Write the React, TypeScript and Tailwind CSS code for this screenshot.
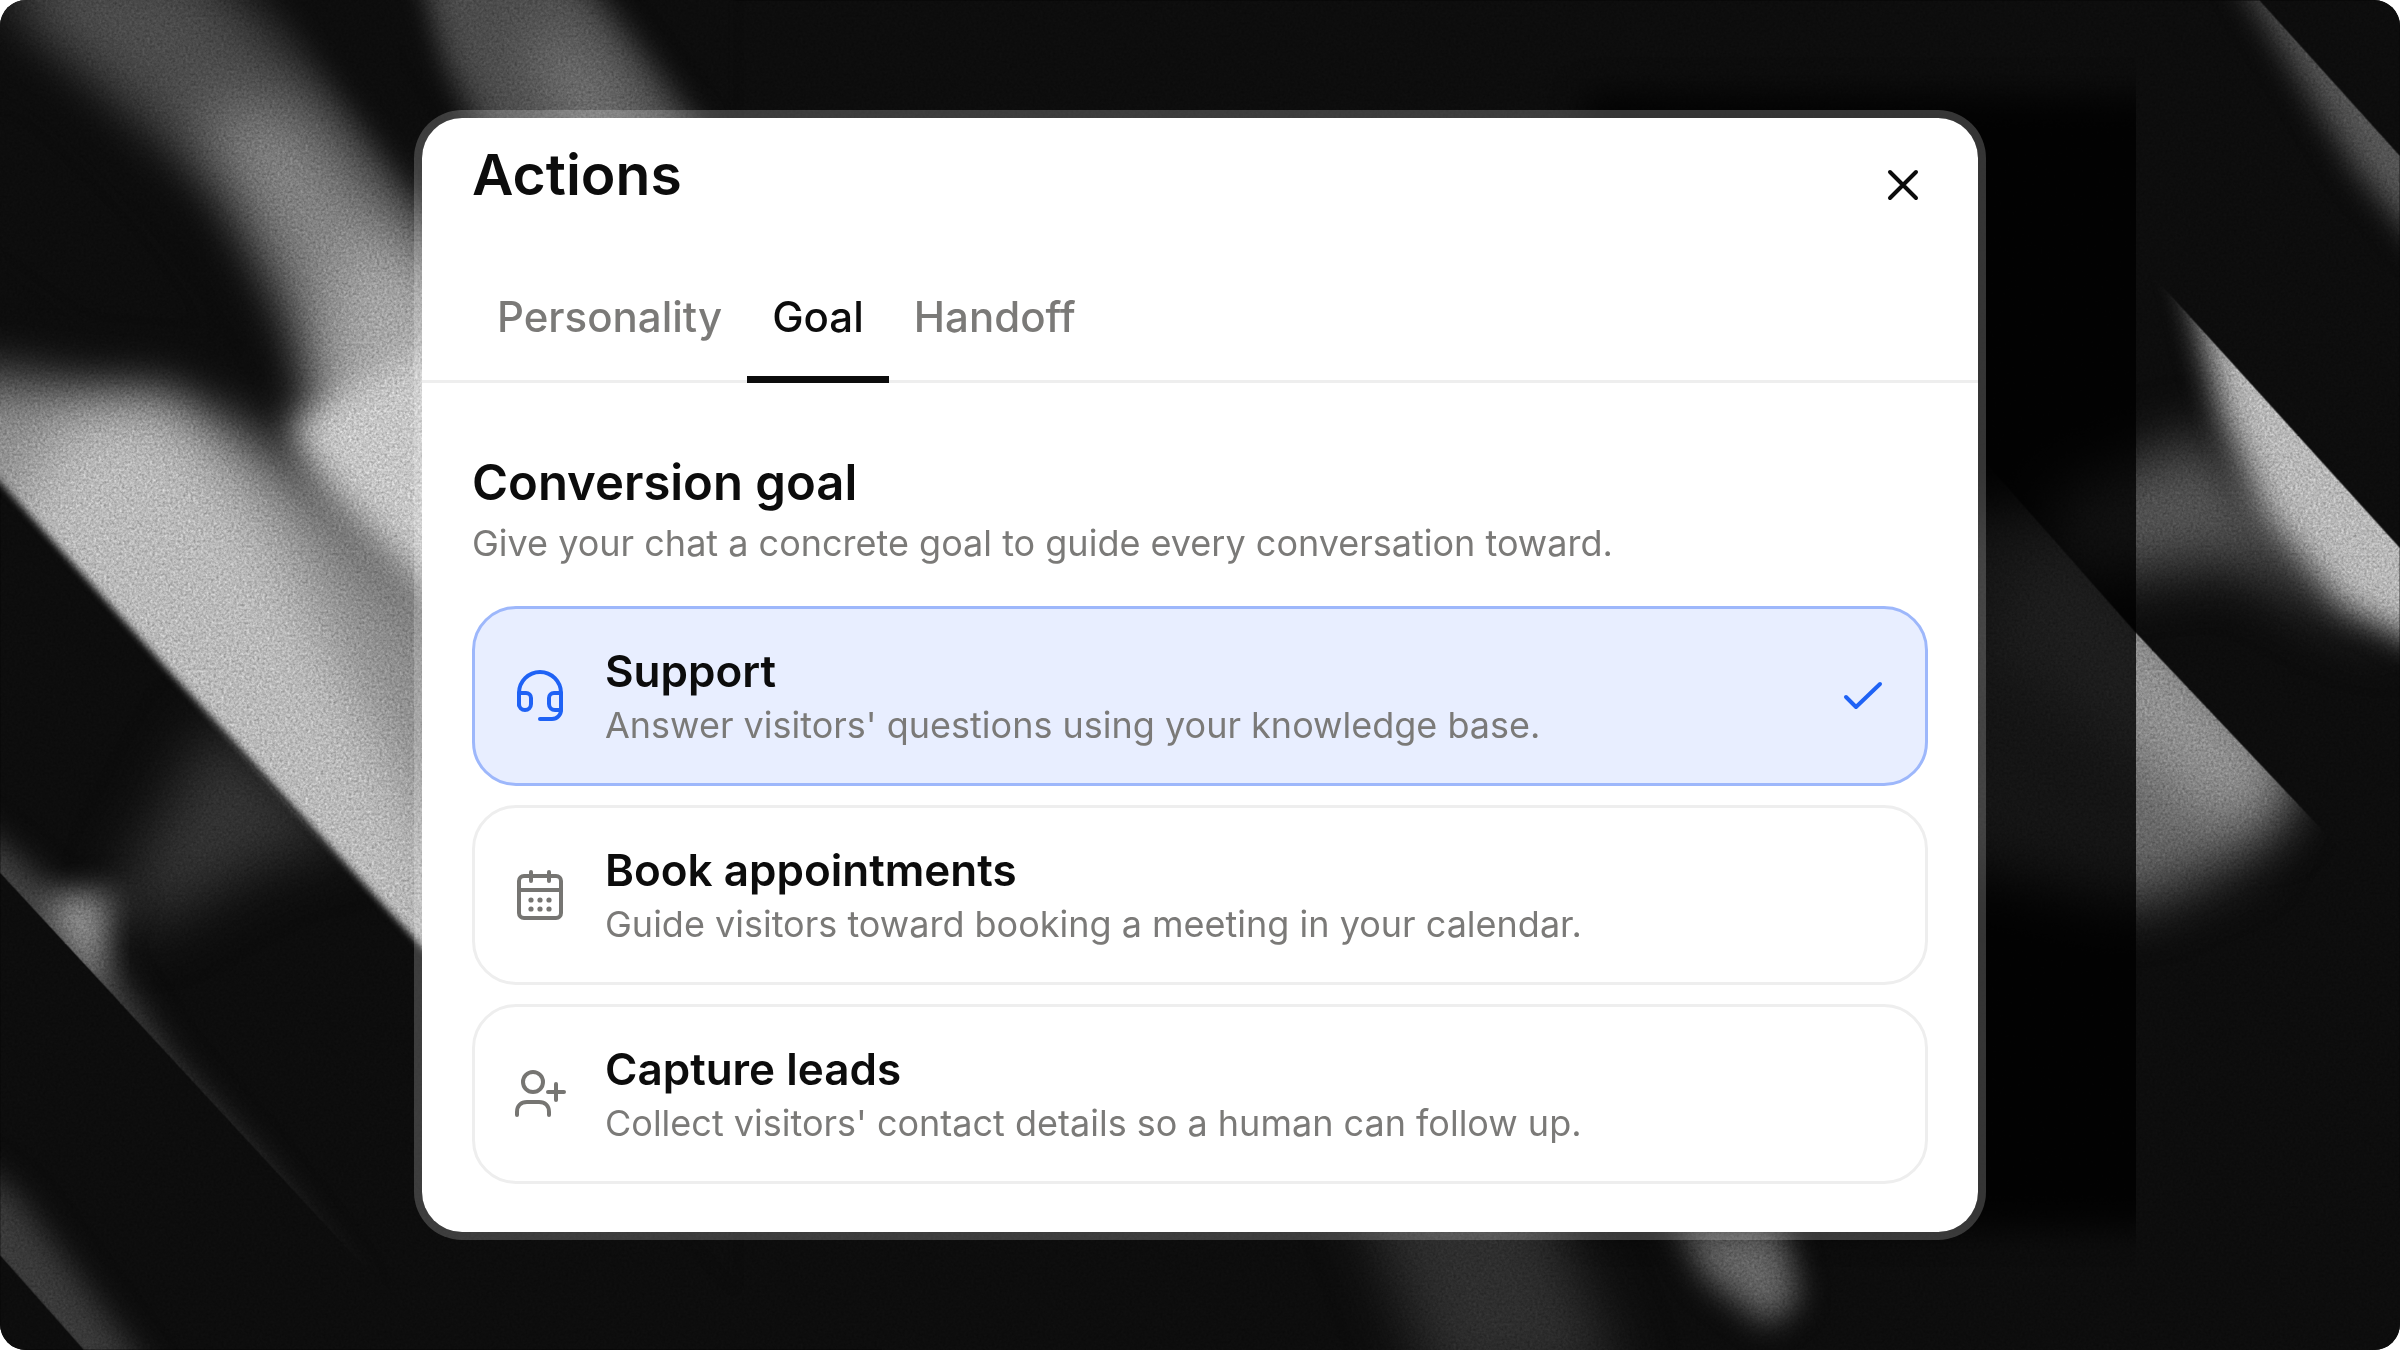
import { useState } from "react";
import type { ReactNode } from "react";

type GoalId = "support" | "book" | "leads";

interface Goal {
  id: GoalId;
  title: string;
  description: string;
  icon: ReactNode;
}

const TABS = ["Personality", "Goal", "Handoff"];

const iconProps = {
  viewBox: "0 0 56 56",
  fill: "none",
  stroke: "currentColor",
  strokeWidth: 4,
  strokeLinecap: "round",
  strokeLinejoin: "round",
  "aria-hidden": true,
  className: "size-14 shrink-0",
} as const;

function HeadsetIcon() {
  return (
    <svg {...iconProps}>
      <path d="M7 37V25a21 21 0 0 1 42 0v17c0 5-4 9-9 9H28" />
      <path d="M7 25h7a5 5 0 0 1 5 5v6a6 6 0 0 1-12 0z" />
      <path d="M49 25h-7a5 5 0 0 0-5 5v6a6 6 0 0 0 6 6h6z" />
    </svg>
  );
}

function CalendarIcon() {
  return (
    <svg {...iconProps}>
      <rect x="7" y="9" width="42" height="42" rx="5" />
      <path d="M7 23h42M19 5v9M37 5v9" />
      <g fill="currentColor" stroke="none">
        <circle cx="19" cy="33" r="2.6" />
        <circle cx="28" cy="33" r="2.6" />
        <circle cx="37" cy="33" r="2.6" />
        <circle cx="19" cy="42" r="2.6" />
        <circle cx="28" cy="42" r="2.6" />
        <circle cx="37" cy="42" r="2.6" />
      </g>
    </svg>
  );
}

function UserPlusIcon() {
  return (
    <svg {...iconProps}>
      <circle cx="21" cy="16" r="10" />
      <path d="M5 49v-3c0-6 4-10 10-10h12c6 0 10 4 10 10v3M44 18v16M36 26h16" />
    </svg>
  );
}

const GOALS: Goal[] = [
  {
    id: "support",
    title: "Support",
    description: "Answer visitors' questions using your knowledge base.",
    icon: <HeadsetIcon />,
  },
  {
    id: "book",
    title: "Book appointments",
    description: "Guide visitors toward booking a meeting in your calendar.",
    icon: <CalendarIcon />,
  },
  {
    id: "leads",
    title: "Capture leads",
    description: "Collect visitors' contact details so a human can follow up.",
    icon: <UserPlusIcon />,
  },
];

/** Grainy light streaks behind the dialog. */
function Backdrop() {
  return (
    <svg
      viewBox="0 0 1568 882"
      preserveAspectRatio="none"
      aria-hidden="true"
      className="absolute inset-0 h-full w-full"
    >
      <defs>
        <filter id="b1" x="-50%" y="-50%" width="200%" height="200%" colorInterpolationFilters="sRGB">
          <feGaussianBlur stdDeviation="2.5" />
        </filter>
        <filter id="b2" x="-50%" y="-50%" width="200%" height="200%" colorInterpolationFilters="sRGB">
          <feGaussianBlur stdDeviation="10" />
        </filter>
        <filter id="b3" x="-50%" y="-50%" width="200%" height="200%" colorInterpolationFilters="sRGB">
          <feGaussianBlur stdDeviation="19" />
        </filter>
        <filter
          id="grain"
          x="0"
          y="0"
          width="1568"
          height="882"
          filterUnits="userSpaceOnUse"
          colorInterpolationFilters="sRGB"
        >
          <feTurbulence type="fractalNoise" baseFrequency="0.6" numOctaves="2" seed="4" />
          <feColorMatrix values="0.6 0.6 0 0 -0.1  0.6 0.6 0 0 -0.1  0.6 0.6 0 0 -0.1  0 0 0 0 1" />
          <feComposite in="SourceGraphic" operator="arithmetic" k1="0.6" k2="0.7" />
        </filter>
        <clipPath id="upperLeft">
          <path d="M-40 -40H480V842L267 609L113 441L0 315L-40 270z" />
        </clipPath>
        <clipPath id="lowerLeft">
          <path d="M0 570L240 830L300 882H400V755L267 612L113 444L0 318z" />
        </clipPath>
        <clipPath id="corner">
          <path d="M0 820L55 882H200V700H0z" />
        </clipPath>
        <clipPath id="wedge">
          <path d="M1300 63L1410 184L1568 358V700H1300z" />
        </clipPath>
        <clipPath id="beam">
          <path d="M1290 294L1395 413L1500 524L1568 596V800H1200V294z" />
        </clipPath>
        <clipPath id="topRight">
          <path d="M1300 0H1476L1568 102V400H1300z" />
        </clipPath>
      </defs>
      <g filter="url(#grain)">
        <rect width="1568" height="882" fill="#0d0d0d" />

        <g clipPath="url(#lowerLeft)">
          <path d="M80 580L140 470L230 550L180 560L90 610z" fill="#343434" filter="url(#b3)" />
          <path d="M-20 535L40 585L85 580L66 620L110 690L170 760L240 850L-20 590z" fill="#424242" filter="url(#b2)" />
          <path d="M30 588L66 586L66 650z" fill="#969696" filter="url(#b2)" />
        </g>
        <g clipPath="url(#corner)">
          <path d="M-30 750L10 780L100 900L-30 900z" fill="#3a3a3a" filter="url(#b2)" />
        </g>

        <g filter="url(#b1)">
          <g clipPath="url(#upperLeft)">
            <path d="M-20 -40H480V842H-20z" fill="#0d0d0d" />
            <path d="M0 -30L120 -30L220 60L300 160V300L220 260L150 130L20 20z" fill="#4c4c4c" filter="url(#b3)" />
            <path d="M130 70L190 75L300 190V340L230 290L180 170z" fill="#848484" filter="url(#b3)" />
            <path d="M230 150L340 230V480L200 320L215 240z" fill="#a8a8a8" filter="url(#b3)" />
            <path d="M-80 245L40 250L110 250L170 290L320 430V720L-80 300z" fill="#8e8e8e" filter="url(#b3)" />
            <path d="M20 310L50 272L110 272L180 350L290 560L300 720L180 580L0 350z" fill="#bababa" filter="url(#b3)" />
            <path d="M190 278L225 258L300 215V400L250 345L205 300z" fill="#c6c6c6" filter="url(#b2)" />
            <path d="M-30 20L40 60L110 130L165 205L175 268L110 238L50 238L-40 170z" fill="#0d0d0d" filter="url(#b3)" />
            <path d="M260 -40L360 -40L460 90L420 120L330 110L290 40z" fill="#4c4c4c" filter="url(#b2)" />
            <path d="M340 20L375 25L430 95L380 100z" fill="#787878" filter="url(#b3)" />
            <path d="M170 -30L270 -20L280 60L290 140L262 110L225 60z" fill="#0d0d0d" filter="url(#b2)" />
          </g>
        </g>

        <g clipPath="url(#topRight)">
          <path d="M1460 -20L1480 -20L1590 100V170L1540 110z" fill="#565656" filter="url(#b2)" />
        </g>
        <g clipPath="url(#wedge)">
          <path d="M1340 325L1440 285L1520 370L1568 420L1460 365L1340 380z" fill="#545454" filter="url(#b3)" />
          <path d="M1422 150L1620 370V440L1530 395L1480 335L1452 270z" fill="#b8b8b8" filter="url(#b2)" />
        </g>
        <g clipPath="url(#beam)">
          <path d="M1260 340L1330 330L1490 510L1465 560L1395 590L1260 560z" fill="#686868" filter="url(#b3)" />
          <path d="M1340 340L1400 390L1500 500L1480 540L1440 530L1380 480L1300 420z" fill="#929292" filter="url(#b3)" />
        </g>

        <path d="M880 760L1000 760L1060 900L940 910z" fill="#2e2e2e" filter="url(#b3)" />
        <path d="M1080 770L1160 780L1175 850L1155 865L1115 835z" fill="#646464" filter="url(#b2)" />
      </g>
    </svg>
  );
}

export default function App() {
  const [tab, setTab] = useState("Goal");
  const [selected, setSelected] = useState<GoalId>("support");

  return (
    <div className="bg-white font-['Inter','Liberation_Sans',sans-serif]">
      <main className="relative flex min-h-screen items-center justify-center overflow-hidden rounded-[26px] bg-[#0d0d0d]">
        <Backdrop />

        {/* The dialog's shadow, cut off hard on its right-hand side */}
        <div className="absolute inset-y-0 right-[11%] w-[27%] overflow-hidden" aria-hidden="true">
          <div className="absolute top-[7%] -right-20 bottom-[9%] left-[15%] bg-black/80 blur-lg" />
        </div>

        <section
          role="dialog"
          aria-labelledby="dialog-title"
          className="relative w-full max-w-[1572px] rounded-[48px] border-8 border-white/20 bg-white bg-clip-padding text-[#0c0c0c]"
        >
          <header className="flex items-center justify-between px-[50px] pt-[23px]">
            <h1 id="dialog-title" className="text-[57px] leading-[60px] font-semibold">
              Actions
            </h1>
            <button type="button" aria-label="Close" className="mt-5 flex size-12 items-center justify-center">
              <svg viewBox="0 0 48 48" fill="none" stroke="currentColor" strokeWidth="4" strokeLinecap="round" className="size-12">
                <path d="M10 11l26 26M36 11L10 37" />
              </svg>
            </button>
          </header>

          <nav role="tablist" className="mt-[58px] flex border-b-3 border-[#eeeeee] px-[50px]">
            {TABS.map((name) => (
              <button
                key={name}
                type="button"
                role="tab"
                aria-selected={tab === name}
                onClick={() => setTab(name)}
                className={`-mb-[3px] border-b-[7px] px-[25px] pt-[22px] pb-[31px] text-[42px] leading-[56px] font-medium ${
                  tab === name ? "border-[#0c0c0c]" : "border-transparent text-[#7b7a78]"
                }`}
              >
                {name}
              </button>
            ))}
          </nav>

          <div className="px-[50px] pt-[70px] pb-12">
            <h2 className="text-[49px] leading-[60px] font-semibold">Conversion goal</h2>
            <p className="text-[36px] leading-[60px] text-[#7b7a78]">
              Give your chat a concrete goal to guide every conversation toward.
            </p>

            <div role="radiogroup" aria-label="Conversion goal" className="mt-[33px] flex flex-col gap-[19px]">
              {GOALS.map((goal) => {
                const active = goal.id === selected;
                return (
                  <button
                    key={goal.id}
                    type="button"
                    role="radio"
                    aria-checked={active}
                    onClick={() => setSelected(goal.id)}
                    className={`flex items-center gap-[37px] rounded-[44px] border-3 px-[37px] py-8 text-left ${
                      active ? "border-[#9db7fb] bg-[#e8eeff]" : "border-[#eeeeee] bg-white"
                    }`}
                  >
                    <span className={active ? "text-[#1f62f5]" : "text-[#767572]"}>{goal.icon}</span>
                    <span className="flex-1 pt-[2px]">
                      <span className="block text-[44px] leading-[56px] font-semibold">{goal.title}</span>
                      <span className="block text-[36px] leading-[52px] text-[#7b7a78]">{goal.description}</span>
                    </span>
                    {active && (
                      <svg viewBox="0 0 48 48" fill="none" stroke="#1f62f5" strokeWidth="4" strokeLinecap="round" strokeLinejoin="round" className="size-12" aria-hidden="true">
                        <path d="M6 25l10 10L40 12" />
                      </svg>
                    )}
                  </button>
                );
              })}
            </div>
          </div>
        </section>
      </main>
    </div>
  );
}
